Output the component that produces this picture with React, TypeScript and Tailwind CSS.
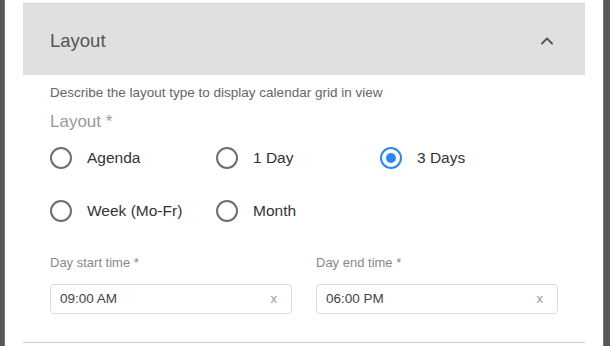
import { ChevronUp } from "lucide-react";

const options = [
  { label: "Agenda", checked: false },
  { label: "1 Day", checked: false },
  { label: "3 Days", checked: true },
  { label: "Week (Mo-Fr)", checked: false },
  { label: "Month", checked: false },
];

function Radio({ label, checked }: { label: string; checked: boolean }) {
  return (
    <label className="flex h-[53px] items-center gap-[15px]">
      <span
        className={`flex h-[22px] w-[22px] items-center justify-center rounded-full border-2 ${
          checked ? "border-[#2b88f0]" : "border-[#6e6e6e]"
        }`}
      >
        {checked && <span className="h-[10px] w-[10px] rounded-full bg-[#2b88f0]" />}
      </span>
      <span className="text-[15.5px] text-[#333]">{label}</span>
    </label>
  );
}

function TimeField({ label, value }: { label: string; value: string }) {
  return (
    <div className="flex w-[242px] flex-col">
      <span className="text-[13px] leading-[16px] text-[#888]">{label}</span>
      <div className="mt-[13px] flex h-[30px] items-center justify-between rounded-[4px] border border-[#dcdcdc] pl-[9px] pr-[14px]">
        <span className="text-[13.5px] text-[#444]">{value}</span>
        <span className="text-[13px] text-[#999]">x</span>
      </div>
    </div>
  );
}

export default function App() {
  return (
    <div className="flex h-[346px] w-[610px] overflow-hidden bg-white [font-family:'Liberation_Sans',Arial,sans-serif]">
      {/* backdrop edge */}
      <div className="w-[5px] border-r border-[#777] bg-[#575757]" />

      <div className="flex flex-1 flex-col px-[18px] pt-[3px]">
        <div className="border-t border-[#cfcfcf]" />

        {/* accordion header */}
        <div className="flex h-[71px] items-center justify-between bg-[#e0e0e0] pl-[27px] pr-[28px] pt-[3px]">
          <span className="text-[18.5px] text-[#555]">Layout</span>
          <ChevronUp className="h-[20px] w-[20px] text-[#555]" strokeWidth={2.25} />
        </div>

        {/* body */}
        <div className="flex flex-col px-[27px]">
          <p className="mt-[10px] text-[13.5px] leading-[16px] text-[#666]">
            Describe the layout type to display calendar grid in view
          </p>
          <p className="mt-[10px] text-[17px] leading-[22px] text-[#999]">Layout *</p>

          <div className="-mt-[2px] grid grid-cols-[166px_164px_1fr]">
            {options.map((o) => (
              <Radio key={o.label} label={o.label} checked={o.checked} />
            ))}
          </div>

          <div className="mt-[18px] flex gap-[24px]">
            <TimeField label="Day start time *" value="09:00 AM" />
            <TimeField label="Day end time *" value="06:00 PM" />
          </div>
        </div>

        <div className="mt-[28px] border-t border-[#cfcfcf]" />
      </div>

      <div className="w-[7px] border-l border-[#777] bg-[#575757]" />
    </div>
  );
}
